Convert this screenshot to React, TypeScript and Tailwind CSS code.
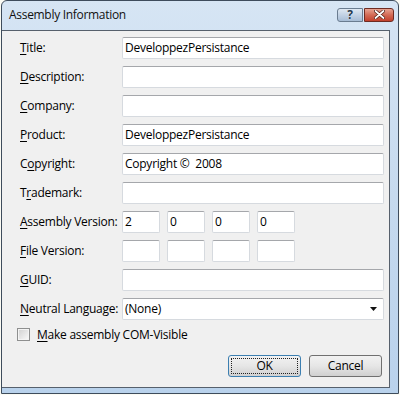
import React from "react";

type Row = {
  pre?: string;
  key: string;
  post: string;
  value?: string;
  kind?: "text" | "version" | "combo";
  parts?: string[];
};

const ROWS: Row[] = [
  { key: "T", post: "itle:", value: "DeveloppezPersistance" },
  { key: "D", post: "escription:" },
  { key: "C", post: "ompany:" },
  { key: "P", post: "roduct:", value: "DeveloppezPersistance" },
  { pre: "C", key: "o", post: "pyright:", value: "Copyright ©  2008" },
  { pre: "T", key: "r", post: "ademark:" },
  { key: "A", post: "ssembly Version:", kind: "version", parts: ["2", "0", "0", "0"] },
  { key: "F", post: "ile Version:", kind: "version", parts: ["", "", "", ""] },
  { key: "G", post: "UID:" },
  { key: "N", post: "eutral Language:", kind: "combo", value: "(None)" },
];

const box =
  "h-[22px] rounded-[2px] border border-[#d6dadf] border-t-[#a5a7ab] bg-white px-[2px] flex items-center whitespace-pre";

function Label({ r }: { r: Row }) {
  return (
    <div className="flex h-[22px] items-center whitespace-pre pl-[3px]">
      {r.pre}
      <span className="underline underline-offset-[2px]">{r.key}</span>
      {r.post}
    </div>
  );
}

function Field({ r }: { r: Row }) {
  if (r.kind === "version") {
    return (
      <div className="flex gap-[7px]">
        {r.parts!.map((p, i) => (
          <div key={i} className={`${box} w-[38px]`}>
            {p}
          </div>
        ))}
      </div>
    );
  }
  if (r.kind === "combo") {
    return (
      <div className={`${box} justify-between`}>
        <span>{r.value}</span>
        <svg width="7" height="4" viewBox="0 0 7 4" className="mr-[4px]">
          <path d="M0 0h7L3.5 4z" fill="#111" />
        </svg>
      </div>
    );
  }
  return <div className={box}>{r.value}</div>;
}

export default function App() {
  return (
    <div className="h-[395px] w-[400px] bg-[#fbfbf4] pl-[1px] font-['Segoe_UI','Open_Sans',sans-serif] text-[12px] tracking-[-0.25px] text-black">
      <div className="flex h-[394px] w-[398px] flex-col rounded-t-[6px] border border-[#3e4c5c] bg-gradient-to-b from-[#d6e5f4] via-[#c6daee] to-[#b9d2ec]">
        {/* title bar */}
        <div className="flex h-[29px] shrink-0 items-center justify-between pl-[7px] pr-[4px]">
          <span className="pb-[1px] text-[12px] tracking-[-0.3px] text-[#111]">Assembly Information</span>
          <div className="flex gap-[1px] pb-[2px]">
            <div className="flex h-[14px] w-[26px] items-center justify-center rounded-l-[3px] border border-[#6a7c90] bg-gradient-to-b from-[#dfe8f2] via-[#c2d2e4] to-[#a7bdd5]">
              <span className="text-[12px] leading-none font-bold text-[#25384d] [text-shadow:0_0_1px_#fff]">?</span>
            </div>
            <div className="flex h-[14px] w-[30px] items-center justify-center rounded-r-[3px] border border-[#6e2b22] bg-gradient-to-b from-[#e7a392] via-[#d36a55] to-[#c2402c]">
              <svg width="11" height="9" viewBox="0 0 11 9">
                <path d="M1.5 1l8 7M9.5 1l-8 7" stroke="#4a1a12" strokeWidth="3.2" strokeLinecap="round" />
                <path d="M1.5 1l8 7M9.5 1l-8 7" stroke="#fff" strokeWidth="1.8" strokeLinecap="round" />
              </svg>
            </div>
          </div>
        </div>

        {/* client area */}
        <div className="mb-[5px] mr-[8px] flex flex-1 flex-col border-r border-t border-b border-[#56606c] bg-[#f0f0f0] pl-[15px] pr-[5px] pt-[6px]">
          <div className="grid grid-cols-[105px_1fr] gap-y-[7px]">
            {ROWS.map((r, i) => (
              <React.Fragment key={i}>
                <Label r={r} />
                <Field r={r} />
              </React.Fragment>
            ))}
          </div>

          <div className="mt-[8px] flex h-[13px] items-center gap-[7px]">
            <div className="flex h-[13px] w-[13px] items-center justify-center border border-[#8e8f8f] bg-[#f4f4f4]">
              <div className="h-[9px] w-[9px] bg-gradient-to-br from-[#d4d4d4] to-[#f7f7f7]" />
            </div>
            <span className="whitespace-pre">
              <span className="underline underline-offset-[2px]">M</span>ake assembly COM-Visible
            </span>
          </div>

          <div className="mr-[2px] mt-[14px] flex justify-end gap-[8px]">
            <div className="flex h-[22px] w-[73px] items-center justify-center rounded-[3px] border border-[#3c7fb1] bg-gradient-to-b from-[#f2f2f2] via-[#e6e6e6] to-[#d0d0d0] p-[2px]">
              <div className="flex h-full w-full items-center justify-center border border-dotted border-[#222]">
                OK
              </div>
            </div>
            <div className="flex h-[22px] w-[73px] items-center justify-center rounded-[3px] border border-[#707070] bg-gradient-to-b from-[#f2f2f2] via-[#e6e6e6] to-[#d0d0d0]">
              Cancel
            </div>
          </div>
        </div>
      </div>
    </div>
  );
}
